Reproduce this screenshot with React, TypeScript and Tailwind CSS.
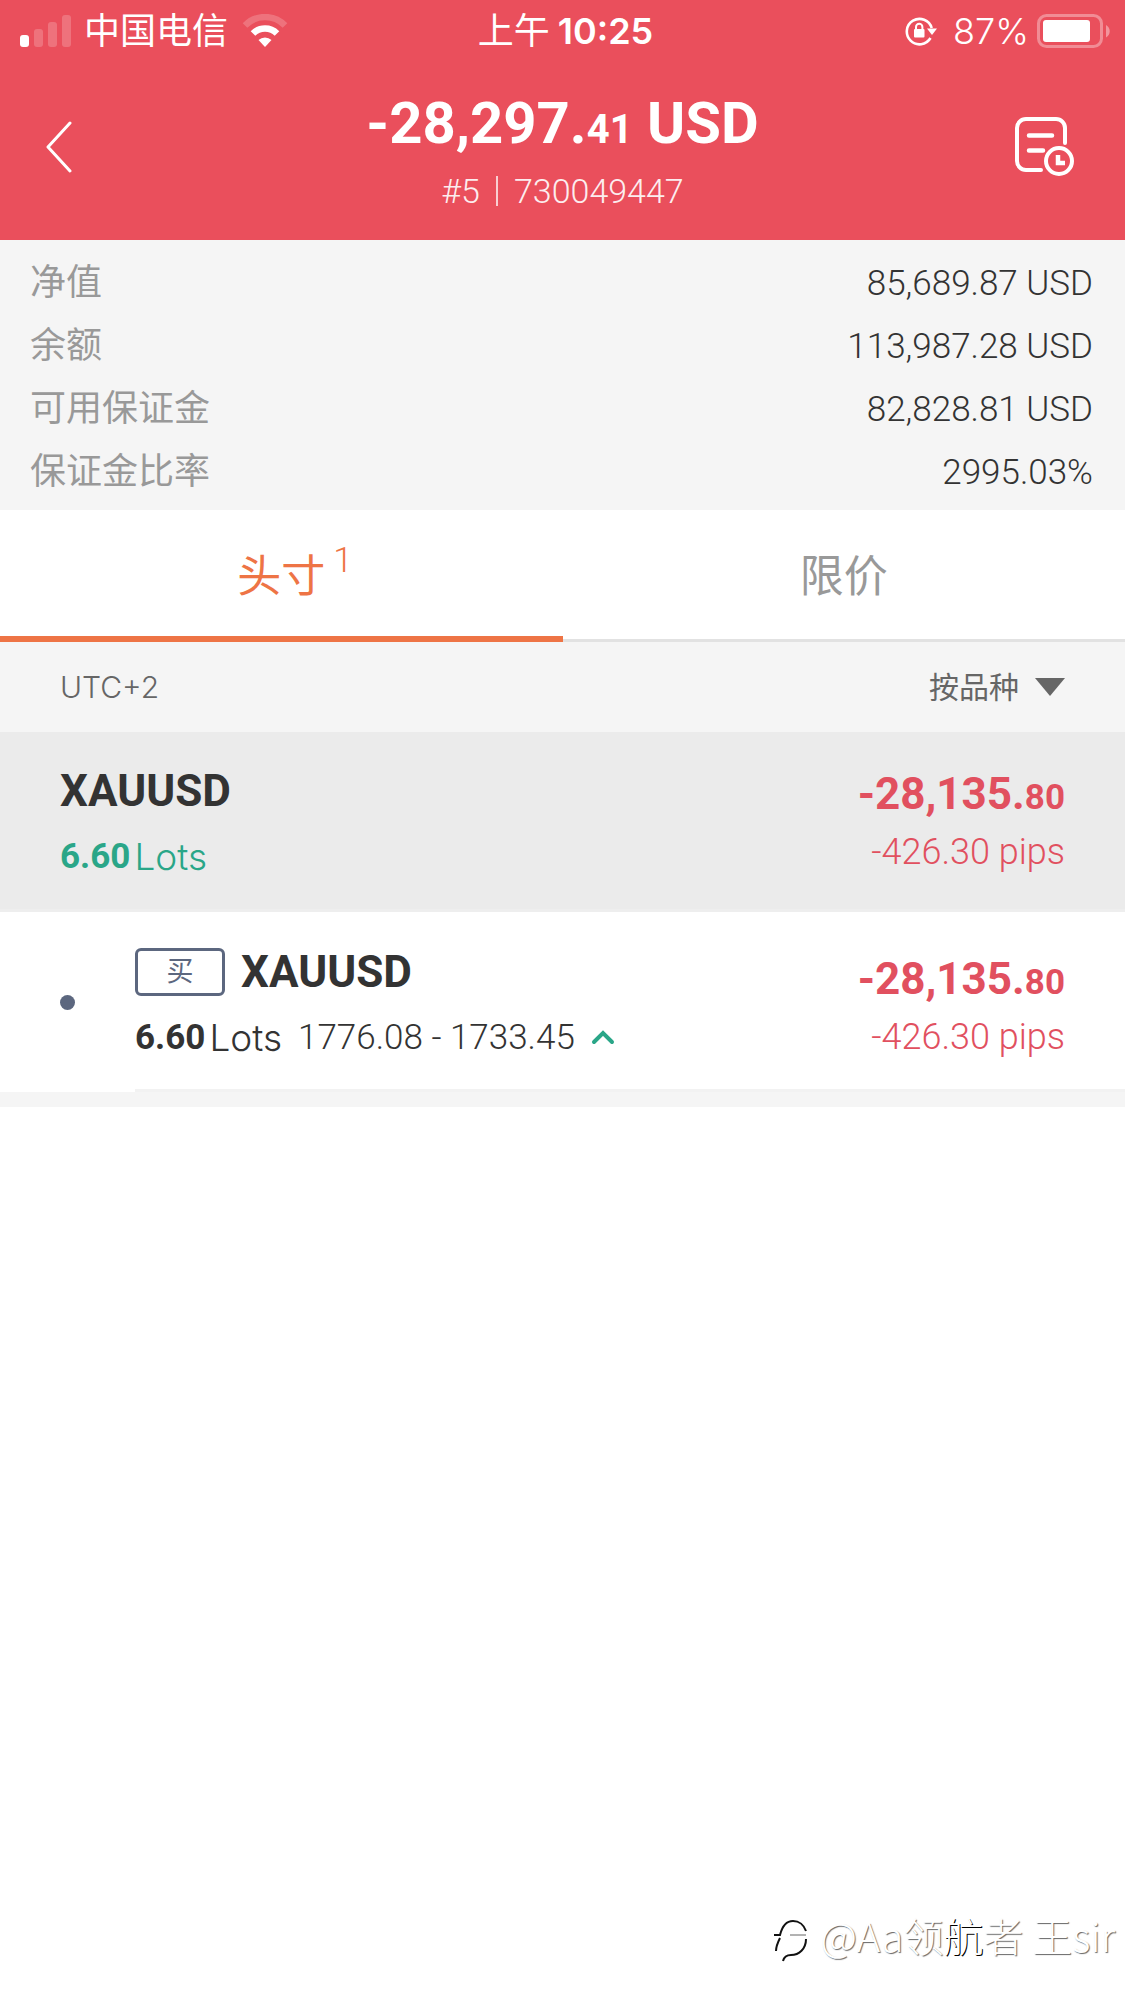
import { useState } from 'react';

interface SummaryRow {
  label: string;
  value: string;
}

interface ProfitProps {
  whole: string;
  cents: string;
  pips: string;
}

const summary: SummaryRow[] = [
  { label: '净值', value: '85,689.87 USD' },
  { label: '余额', value: '113,987.28 USD' },
  { label: '可用保证金', value: '82,828.81 USD' },
  { label: '保证金比率', value: '2995.03%' },
];

function StatusBar() {
  return (
    <div className="grid h-[62px] grid-cols-[1fr_auto_1fr] items-center pl-5 pr-[14px] font-['Inter','Noto_Sans_CJK_SC',sans-serif] text-[36px] leading-[62px]">
      <div className="flex items-center">
        <svg width="51" height="33" viewBox="0 0 51 33" fill="currentColor" aria-hidden="true">
          <rect x="0" y="20" width="9" height="12" rx="3" />
          <rect x="14" y="14" width="9" height="18" rx="3" opacity="0.2" />
          <rect x="28" y="7" width="9" height="25" rx="3" opacity="0.2" />
          <rect x="42" y="0" width="9" height="32" rx="3" opacity="0.2" />
        </svg>
        <span className="ml-[13px]">中国电信</span>
        <svg className="ml-[14px]" width="46" height="34" viewBox="0 0 46 34" fill="none" stroke="currentColor" aria-hidden="true">
          <path d="M3 11.5a28 28 0 0 1 40 0" strokeWidth="6.5" opacity="0.2" />
          <path d="M11 19.5a17 17 0 0 1 24 0" strokeWidth="6.5" />
          <path d="M16.5 26a9.5 9.5 0 0 1 13 0L23 33z" fill="currentColor" stroke="none" />
        </svg>
      </div>
      <div className="flex gap-2">
        <span>上午</span>
        <span className="font-semibold">10:25</span>
      </div>
      <div className="flex items-center justify-end">
        <svg width="32" height="30" viewBox="0 0 32 30" fill="none" stroke="currentColor" strokeWidth="2.6" aria-hidden="true">
          <path d="M25.5 22A12.7 12.7 0 1 1 26.7 12" />
          <path d="M22 12.5h10l-5 6.5z" fill="currentColor" stroke="none" />
          <rect x="9" y="13" width="10.5" height="8.5" rx="1" fill="currentColor" stroke="none" />
          <path d="M11 13.5v-2.5a3.2 3.2 0 0 1 6.4 0v2.5" strokeWidth="2" />
        </svg>
        <span className="ml-4 font-light">87%</span>
        <svg className="ml-2" width="74" height="34" viewBox="0 0 74 34" fill="none" aria-hidden="true">
          <rect x="1.5" y="1.5" width="63" height="31" rx="8" stroke="currentColor" strokeWidth="3" opacity="0.35" />
          <rect x="6" y="6" width="47" height="22" rx="3" fill="currentColor" />
          <path d="M69 11c5 2.5 5 10 0 12.5z" fill="currentColor" opacity="0.4" />
        </svg>
      </div>
    </div>
  );
}

function Profit({ whole, cents, pips }: ProfitProps) {
  return (
    <div className="text-right leading-[55px] text-[#e1505f]">
      <div className="text-[44px] font-bold">
        {whole}.<span className="text-[35px]">{cents}</span>
      </div>
      <div className="text-[36px] font-light">{pips} pips</div>
    </div>
  );
}

export default function App() {
  const [tab, setTab] = useState<'positions' | 'limits'>('positions');
  const [open, setOpen] = useState(true);

  return (
    <div className="flex min-h-screen flex-col bg-white font-['Roboto','Noto_Sans_CJK_SC',sans-serif] text-[#333333]">
      <header className="bg-[#ea4f5c] text-white">
        <StatusBar />
        <div className="flex items-start justify-between pb-2 pl-[46px] pr-[50px]">
          <button type="button" aria-label="返回" className="flex h-[170px] w-[68px] items-center">
            <svg width="26" height="52" viewBox="0 0 26 52" fill="none" stroke="currentColor" strokeWidth="3" strokeLinecap="round" strokeLinejoin="round">
              <path d="M24 2L2 26l22 24" />
            </svg>
          </button>
          <div className="pt-7 text-center">
            <h1 className="text-[58px] font-bold leading-[66px]">
              -28,297.<span className="text-[40px]">41</span> USD
            </h1>
            <p className="flex items-center justify-center gap-4 text-[34px] font-light leading-[56px] opacity-90">
              <span>#5</span>
              <span className="h-[30px] w-[2px] bg-white/80" />
              <span>730049447</span>
            </p>
          </div>
          <button type="button" aria-label="历史" className="flex h-[170px] w-16 items-center justify-end">
            <svg width="60" height="60" viewBox="0 0 60 60" fill="none" stroke="currentColor" strokeWidth="4" strokeLinecap="round">
              <path d="M26 53H11a9 9 0 0 1-9-9V11a9 9 0 0 1 9-9h30a9 9 0 0 1 9 9v15" />
              <path d="M14 18.5h23M14 33.5h14" strokeWidth="4.5" />
              <circle cx="44" cy="44" r="13" />
              <path d="M43 38v8h7" strokeLinecap="butt" strokeWidth="4.5" />
            </svg>
          </button>
        </div>
      </header>

      <dl className="bg-[#f5f5f5] pb-1.5 pl-[30px] pr-8 pt-3 leading-[63px]">
        {summary.map((row) => (
          <div key={row.label} className="flex justify-between">
            <dt className="text-[36px] text-[#999999]">{row.label}</dt>
            <dd className="text-[35px] font-light">{row.value}</dd>
          </div>
        ))}
      </dl>

      <div role="tablist" className="grid h-[132px] grid-cols-2 text-[44px]">
        <button
          type="button"
          role="tab"
          aria-selected={tab === 'positions'}
          onClick={() => setTab('positions')}
          className={`border-b-[6px] pt-2 ${tab === 'positions' ? 'border-[#ee7445] text-[#ee7445]' : 'border-[#e2e2e2] text-[#999999]'}`}
        >
          <span className="relative">
            头寸
            <sup className="absolute -top-2 left-full ml-2 text-[35px] font-light leading-none">1</sup>
          </span>
        </button>
        <button
          type="button"
          role="tab"
          aria-selected={tab === 'limits'}
          onClick={() => setTab('limits')}
          className={`pt-1 ${tab === 'limits' ? 'border-b-[6px] border-[#ee7445] text-[#ee7445]' : 'border-b-[3px] border-[#e2e2e2] text-[#999999]'}`}
        >
          限价
        </button>
      </div>

      <div className="flex h-[90px] items-center justify-between bg-[#f5f5f5] px-[60px] font-['Inter','Noto_Sans_CJK_SC',sans-serif] text-[30px] font-light text-[#666666]">
        <span>UTC+2</span>
        <label className="flex items-center gap-4">
          <select aria-label="排序" className="appearance-none bg-transparent font-normal">
            <option>按品种</option>
          </select>
          <svg width="30" height="18" viewBox="0 0 30 18" fill="currentColor" aria-hidden="true">
            <path d="M0 0h30L15 18z" />
          </svg>
        </label>
      </div>

      <section className="flex h-[180px] items-center justify-between border-b-[3px] border-[#eeeeee] bg-[#ebebeb] px-[60px] pt-1.5">
        <div className="leading-[65px]">
          <h2 className="text-[44px] font-bold">XAUUSD</h2>
          <p className="flex gap-1 text-[35px] text-[#2aa688]">
            <b>6.60</b>
            <span className="font-['Inter',sans-serif] text-[37px] font-light">Lots</span>
          </p>
        </div>
        <Profit whole="-28,135" cents="80" pips="-426.30" />
      </section>

      <section className="flex items-stretch border-b-[15px] border-[#f5f5f5]">
        <div className="flex w-[135px] items-center pl-[60px]">
          <span className="size-[15px] rounded-full bg-[#5c677f]" />
        </div>
        <div className="flex h-[180px] grow items-center justify-between border-b-[3px] border-[#f2f2f2] pr-[60px] pt-2">
          <div className="leading-[65px]">
            <div className="flex items-center gap-4">
              <span className="flex h-12 w-[90px] items-center justify-center rounded-md border-[3px] border-[#5c677f] text-[27px] leading-none text-[#5c677f]">买</span>
              <h3 className="text-[44px] font-bold">XAUUSD</h3>
            </div>
            <div className="flex items-center text-[35px]">
              <b>6.60</b>
              <span className="ml-1 font-['Inter',sans-serif] text-[37px] font-light">Lots</span>
              <span className="ml-4 font-light">1776.08 - 1733.45</span>
              <button type="button" aria-label="展开" aria-expanded={open} onClick={() => setOpen(!open)} className="ml-4">
                <svg width="24" height="16" viewBox="0 0 24 16" fill="none" stroke="#2aa688" strokeWidth="4" strokeLinecap="round">
                  <path d="M3 13l9-9 9 9" />
                </svg>
              </button>
            </div>
          </div>
          <div className="pt-2">
            <Profit whole="-28,135" cents="80" pips="-426.30" />
          </div>
        </div>
      </section>

      <footer className="mt-auto flex items-center justify-end gap-3 pb-[38px] pr-[10px] font-['Noto_Sans_CJK_SC',sans-serif] text-[40px] font-light leading-[56px] text-white [text-shadow:1px_1px_1px_#666666]">
        <svg className="mt-3" width="34" height="42" viewBox="0 0 34 42" fill="none" stroke="#111111" strokeWidth="2" aria-hidden="true">
          <path d="M2 31C2 26 4 22 6 18M0 15h6C8 7 12 1 19 1c6 0 11 4 13 10M32 19c0 10-7 16-15 16-4 0-7 2-8 6" />
          <path d="M16 15h16" strokeWidth="1" stroke="#666666" />
        </svg>
        <span>
          @Aa领<span className="[text-shadow:1px_1px_0_#000000]">航</span>者 王sir
        </span>
      </footer>
    </div>
  );
}
